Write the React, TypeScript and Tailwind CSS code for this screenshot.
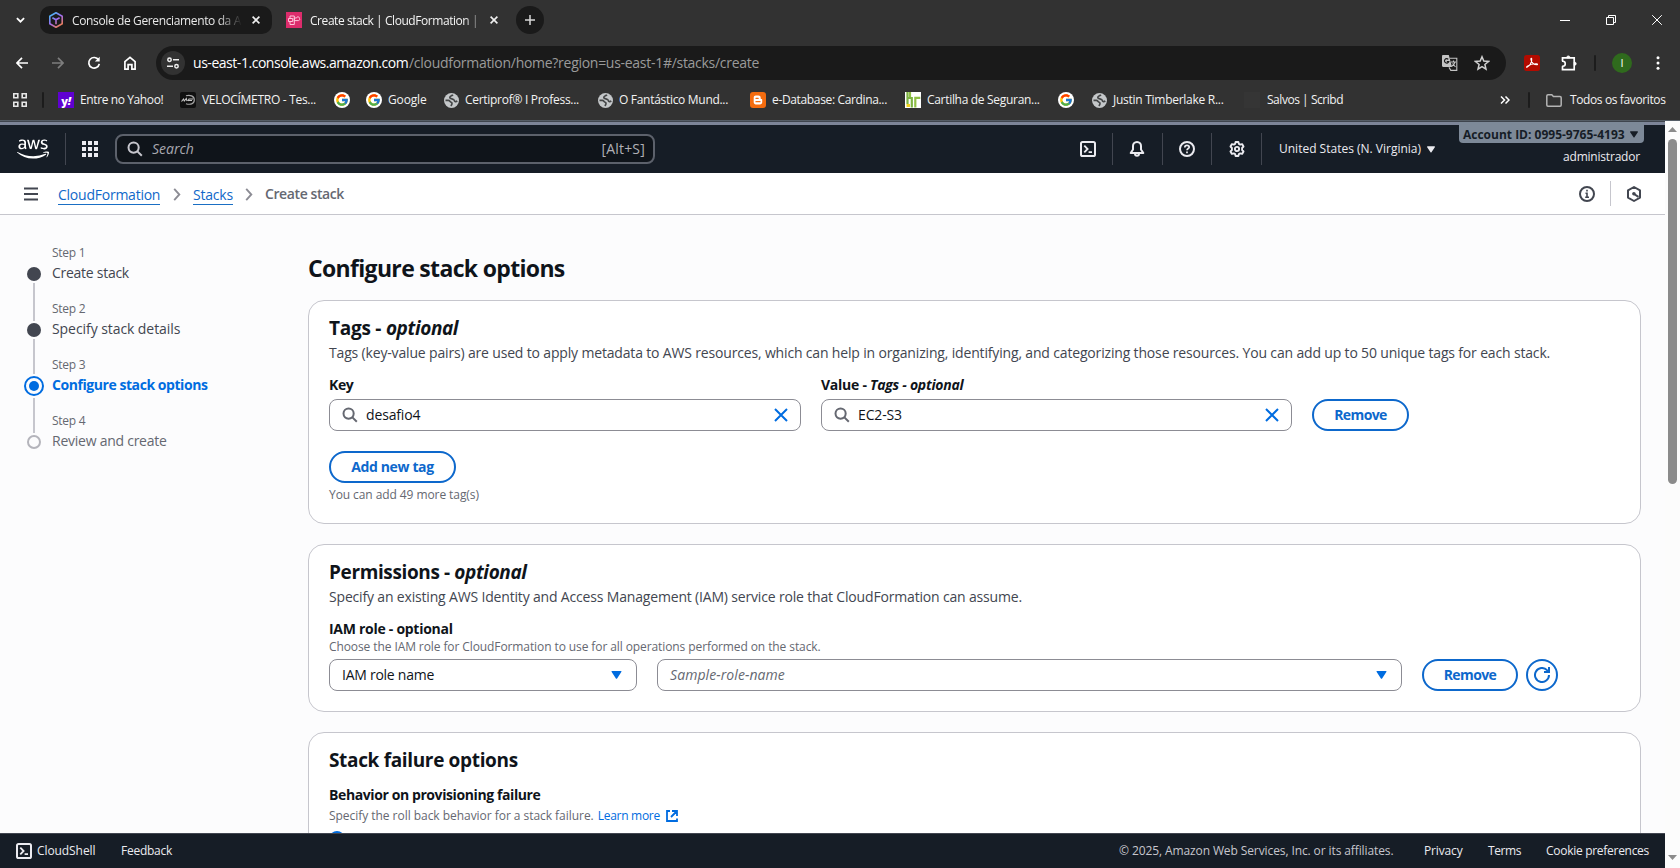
import type { ReactNode } from "react";
import { FaAws } from "react-icons/fa";
import { FcGoogle } from "react-icons/fc";

function Globe() {
  return (
    <svg viewBox="0 0 16 16" className="size-[15px] shrink-0">
      <circle cx="8" cy="8" r="8" fill="#c4c7c9" />
      <path d="M9.5 1.800C8.500 3.200 6 2.800 6.200 5c.200 1.800 4.600.8 4.800 3 .1 1.300 1.800 1.500 3.200.5M1.600 7.800h3.200c1.400 0 1.400 1.600 2.800 2s1.200 2.600-.4 4" fill="none" stroke="#444647" strokeWidth="1.800" />
    </svg>
  );
}

function GoogleBadge() {
  return (
    <span className="flex size-4 shrink-0 items-center justify-center rounded-full bg-white">
      <FcGoogle className="size-[14px]" />
    </span>
  );
}

function CloudShellIcon() {
  return (
    <svg viewBox="0 0 16 16" className="size-4 shrink-0" fill="none" stroke="currentColor" strokeWidth="2">
      <rect x="1" y="1" width="14" height="14" rx="1.6" />
      <path d="M4.300 4.600L7.600 8l-3.300 3.400M8.600 11.200h3.400" strokeWidth="1.800" />
    </svg>
  );
}

function SearchIcon({ className }: { className: string }) {
  return (
    <svg viewBox="0 0 16 16" className={className} fill="none" stroke="currentColor" strokeWidth="2">
      <circle cx="6.600" cy="6.600" r="5.100" />
      <path d="M10.400 10.400l4.400 4.400" />
    </svg>
  );
}

function CloseIcon({ className }: { className: string }) {
  return (
    <svg viewBox="0 0 14 14" className={className} fill="none" stroke="currentColor" strokeWidth="2">
      <path d="M1 1l12 12M13 1L1 13" />
    </svg>
  );
}

function TabClose({ className }: { className: string }) {
  return (
    <svg viewBox="0 0 8 8" className={`size-2 shrink-0 ${className}`} fill="none" stroke="#f0f0f0" strokeWidth="1.600">
      <path d="M.6.6l6.800 6.800M7.400.6L.6 7.400" />
    </svg>
  );
}

function Caret({ className }: { className: string }) {
  return (
    <svg viewBox="0 0 10 8" className={className} fill="currentColor">
      <path d="M.8 0h8.400c.7 0 1 .6.6 1.100L5.600 7.500c-.3.4-.9.4-1.200 0L.2 1.100C-.2.6.1 0 .8 0z" />
    </svg>
  );
}

function TabStrip() {
  return (
    <div className="flex h-10 items-center text-xs text-[#e8e8e8]">
      <svg viewBox="0 0 10 6" className="ml-[15.500px] h-1.5 w-[9px] shrink-0" fill="none" stroke="#fff" strokeWidth="2">
        <path d="M1 .8l4 4 4-4" />
      </svg>
      <div className="ml-[15.500px] flex h-7 w-[232px] items-center rounded-[10px] bg-[#1a1a1a]">
        <svg viewBox="0 0 16 16" className="ml-2 size-4 shrink-0" fill="none" stroke="url(#cube)" strokeWidth="1.600" strokeLinejoin="round">
          <defs>
            <linearGradient id="cube" gradientUnits="userSpaceOnUse" x1="2" y1="1" x2="13" y2="15">
              <stop offset="0" stopColor="#35c5f0" />
              <stop offset=".5" stopColor="#a06bf0" />
              <stop offset="1" stopColor="#f5803c" />
            </linearGradient>
          </defs>
          <path d="M8 .8l6.200 3.500v7.400L8 15.200l-6.200-3.500V4.300z" />
          <path d="M4.400 5.700L8 7.800l3.600-2.100M8 7.800v4.400" />
        </svg>
        <span className="ml-2 w-[172px] pt-px tracking-[-0.370px] whitespace-nowrap [mask-image:linear-gradient(to_right,#000_146px,transparent_170px)]">
          Console de Gerenciamento da A
        </span>
        <TabClose className="ml-2" />
      </div>
      <svg viewBox="0 0 16 16" className="ml-[14px] size-4 shrink-0">
        <rect width="16" height="16" fill="#dd2c6c" />
        <path d="M2.500 6.500h4.200v3H2.500zM4 6.500V4h4.300v8.500H4V9.500M8.300 9.200V6h2.200c.3-1.800 3.300-1.400 3 .5.7 1-.1 2.200-1.200 2.100H8.300" fill="none" stroke="#ffc4da" strokeWidth="1" />
      </svg>
      <span className="ml-2 w-[172px] pt-px tracking-[-0.440px] whitespace-nowrap text-[#f4f4f4] [mask-image:linear-gradient(to_right,#000_154px,transparent_176px)]">
        Create stack | CloudFormation |
      </span>
      <TabClose className="ml-2" />
      <span className="ml-[18px] flex size-7 shrink-0 items-center justify-center rounded-full bg-[#1a1a1a]">
        <svg viewBox="0 0 10 10" className="size-2.5" stroke="#d8d8d8" strokeWidth="1.500">
          <path d="M5 0v10M0 5h10" />
        </svg>
      </span>
      <div className="ml-auto flex items-center gap-9 pr-[18px] text-white">
        <svg viewBox="0 0 10 10" className="size-2.5" stroke="currentColor">
          <path d="M0 5.500h10" />
        </svg>
        <svg viewBox="0 0 10 10" className="size-2.5" fill="none" stroke="currentColor">
          <path d="M.5 2.500h7v7h-7zM2.500 2.500v-2h7v7h-2" />
        </svg>
        <svg viewBox="0 0 10 10" className="size-2.5" fill="none" stroke="currentColor">
          <path d="M.2.200l9.600 9.600M9.800.2L.2 9.800" />
        </svg>
      </div>
    </div>
  );
}

function Toolbar() {
  return (
    <div className="flex h-[46px] items-center">
      <svg viewBox="0 0 12 12" className="ml-4 size-3 shrink-0" fill="none" stroke="#fff" strokeWidth="1.700">
        <path d="M12 6H1.200M6 .8L.9 6 6 11.200" />
      </svg>
      <svg viewBox="0 0 12 12" className="ml-6 size-3 shrink-0" fill="none" stroke="#7e7e7e" strokeWidth="1.700">
        <path d="M0 6h10.800M6 .8L11.100 6 6 11.200" />
      </svg>
      <svg viewBox="0 0 12 12" className="ml-6 size-3 shrink-0 overflow-visible" fill="none" stroke="#fff" strokeWidth="1.700">
        <path d="M10.600 3A5.300 5.300 0 1 0 11.300 6.800" />
        <path d="M11.700-.3v4.800H6.900z" fill="#fff" stroke="none" />
      </svg>
      <svg viewBox="0 0 14 14" className="ml-[23px] size-[14px] shrink-0" fill="none" stroke="#fff" strokeWidth="1.700">
        <path d="M1.900 5.700L7 1.400l5.100 4.300v7.400H8.900V8.700H5.100v4.400H1.900z" />
      </svg>
      <div className="ml-[19px] flex h-[34px] w-[1350px] items-center rounded-full bg-[#1a1a1a] text-sm">
        <span className="ml-[5px] flex size-6 items-center justify-center rounded-full bg-[#323232]">
          <svg viewBox="0 0 12 12" className="size-3" fill="none" stroke="#eee" strokeWidth="1.500">
            <circle cx="2.500" cy="2.700" r="1.700" />
            <path d="M6 2.700h6M0 9.300h6" />
            <circle cx="9.500" cy="9.300" r="1.700" />
          </svg>
        </span>
        <span className="ml-2 w-[216px] tracking-[-0.460px] whitespace-nowrap text-white">us-east-1.console.aws.amazon.com</span>
        <span className="tracking-[-0.284px] whitespace-nowrap text-[#9a9a9a]">/cloudformation/home?region=us-east-1#/stacks/create</span>
        <svg viewBox="0 0 16 16" className="ml-auto size-4 shrink-0">
          <path d="M1.200 0h5.600L10 12H1.200C.5 12 0 11.500 0 10.800V1.200C0 .5.500 0 1.200 0z" fill="#c4c4c4" />
          <path d="M7.600 3.200h7.200v12.200H8.800L7 12.400M9 7h5M11.500 5.500V7M13 7c-.500 2-2 3.500-3.500 4.500M10.500 8.500l3 3.500" fill="none" stroke="#c4c4c4" strokeWidth="1.100" />
          <path d="M6.300 4.300a2.200 2.200 0 1 0 .500 2.200H4.800" fill="none" stroke="#1a1a1a" strokeWidth="1.200" />
        </svg>
        <svg viewBox="0 0 16 16" className="mr-4 ml-4 size-4 shrink-0" fill="none" stroke="#d0d0d0" strokeWidth="1.500">
          <path d="M8 1.800l1.800 4.300 4.700.4-3.600 3 1.100 4.600L8 11.700l-4 2.400 1.100-4.600-3.600-3 4.700-.4z" />
        </svg>
      </div>
      <svg viewBox="0 0 16 16" className="ml-[18px] size-4 shrink-0">
        <rect width="16" height="16" rx="2.500" fill="#b30b00" />
        <path d="M3 12.300c2.300-.9 5.200-5 4.700-8.300-.1-1-.9-.8-.8.100.3 3 2.800 5.700 6 5.700.9 0 .8-.9-.2-1-3.200-.2-6.700.6-9.300 2.500-.9.7-1 1.200-.4 1z" fill="none" stroke="#fff" strokeWidth="1.100" />
      </svg>
      <svg viewBox="0 0 16 16" className="ml-[21px] size-4 shrink-0" fill="none" stroke="#fff" strokeWidth="1.700">
        <path d="M1.500 6.200V2.900h11.700V14.600H1.500v-3.300" />
        <path d="M1 6.300h.8a2.400 2.400 0 0 1 0 4.900H1" strokeWidth="1.600" />
        <path d="M5.600 2.900a1.700 2 0 0 1 3.400 0zM13.200 7a2 1.700 0 0 1 0 3.400z" fill="#fff" strokeWidth=".8" />
      </svg>
      <span className="ml-[17px] h-4 w-0.5 rounded bg-[#1c1c1c]" />
      <span className="ml-4 flex size-5 items-center justify-center rounded-full bg-[#2f6a1d] text-[11px] text-white">I</span>
      <svg viewBox="0 0 4 14" className="ml-6 h-[14px] w-1" fill="#fff">
        <circle cx="2" cy="1.800" r="1.500" />
        <circle cx="2" cy="7" r="1.500" />
        <circle cx="2" cy="12.200" r="1.500" />
      </svg>
    </div>
  );
}

function Bookmark({ icon, label, box }: { icon: ReactNode; label?: string; box: string }) {
  return (
    <span className={`flex shrink-0 items-center whitespace-nowrap ${box}`}>
      {icon}
      {label && <span className="ml-1.5">{label}</span>}
    </span>
  );
}

function Bookmarks() {
  return (
    <div className="flex h-[34px] items-center pb-1.5 text-xs text-[#f2f2f2]">
      <svg viewBox="0 0 14 14" className="ml-[13px] size-[14px] shrink-0" fill="none" stroke="#e6e6e6" strokeWidth="1.600">
        <path d="M.8.800h4v4h-4zM9.200.800h4v4h-4zM.8 9.200h4v4h-4zM9.200 9.200h4v4h-4z" />
      </svg>
      <span className="mr-[14px] ml-[15px] h-4 w-0.5 shrink-0 rounded bg-[#1c1c1c]" />
      <Bookmark
        box="w-[122px] tracking-[-0.390px]"
        label="Entre no Yahoo!"
        icon={<span className="flex size-4 items-center justify-center bg-[#5f01d1] text-[11px] leading-none font-extrabold text-white">y<i>!</i></span>}
      />
      <Bookmark
        box="w-[154px] tracking-[-0.290px]"
        label="VELOCÍMETRO - Tes..."
        icon={
          <svg viewBox="0 0 16 16" className="size-4">
            <rect width="16" height="16" rx="2" fill="#101010" />
            <path d="M6 3.800c4-1.300 8.300.2 8.300 4.200s-4.300 5-8.300 3.700" fill="none" stroke="#a5a5a5" strokeWidth="1.200" />
            <path d="M1.500 9.500l2-2.500.8 2 2-2.500.7 2.500M8 9l1-2h4M8.500 8.500H12" fill="none" stroke="#c5c5c5" strokeWidth="1.100" />
          </svg>
        }
      />
      <Bookmark box="w-8" icon={<GoogleBadge />} />
      <Bookmark box="w-[78px] tracking-[-0.140px]" label="Google" icon={<GoogleBadge />} />
      <Bookmark box="w-[154px] tracking-[-0.290px]" label="Certiprof® I Profess..." icon={<Globe />} />
      <Bookmark box="w-[152px] tracking-[-0.300px]" label="O Fantástico Mund..." icon={<Globe />} />
      <Bookmark
        box="w-[155px] tracking-[-0.350px]"
        label="e-Database: Cardina..."
        icon={
          <svg viewBox="0 0 16 16" className="size-4">
            <rect width="16" height="16" rx="3" fill="#f46c0f" />
            <path d="M5.800 3.600h2.700c1.200 0 2.200.9 2.200 2.100v.8c0 .5.500.5 1 .6.400.1.500.4.500.8v2.300c0 1.300-1 2.200-2.200 2.200H5.800c-1.200 0-2.100-.9-2.100-2.100V5.700c0-1.200.9-2.100 2.100-2.100z" fill="#fff" />
            <path d="M6 6.300h2.200M6 9.700h4" stroke="#f46c0f" strokeWidth="1.300" strokeLinecap="round" />
          </svg>
        }
      />
      <Bookmark
        box="w-[153px] tracking-[-0.310px]"
        label="Cartilha de Seguran..."
        icon={
          <svg viewBox="0 0 16 16" className="size-4">
            <rect width="16" height="16" fill="#fff" />
            <path d="M2.500 0v12M2.500 6h4.300v9.500" fill="none" stroke="#7cb342" strokeWidth="2.200" />
            <path d="M5 0v5M10.300 15.500V5.800h5" fill="none" stroke="#8fbf45" strokeWidth="2.200" />
            <path d="M1.500 12h3.500v3H1.500z" fill="#f2d21f" />
          </svg>
        }
      />
      <Bookmark box="w-[34px]" icon={<GoogleBadge />} />
      <Bookmark box="w-[152px] tracking-[-0.270px]" label="Justin Timberlake R..." icon={<Globe />} />
      <Bookmark box="w-[120px] tracking-[-0.460px]" label="Salvos | Scribd" icon={<span className="mr-px size-4 bg-[#353535]" />} />
      <svg viewBox="0 0 10 8" className="ml-auto h-2 w-2.5 shrink-0" fill="none" stroke="#fff" strokeWidth="1.500">
        <path d="M1 .5L4.500 4 1 7.500M5.500.5L9 4 5.500 7.500" />
      </svg>
      <span className="mr-4 ml-[18px] h-4 w-0.5 shrink-0 rounded bg-[#1c1c1c]" />
      <svg viewBox="0 0 16 13" className="h-[13px] w-4 shrink-0" fill="none" stroke="#b4b4b4" strokeWidth="1.500">
        <path d="M.8 2c0-.7.500-1.200 1.200-1.200h3.800l1.600 1.700H14c.7 0 1.200.5 1.200 1.200V11c0 .7-.500 1.200-1.200 1.200H2c-.7 0-1.200-.5-1.200-1.200z" />
      </svg>
      <span className="mr-[14px] ml-2 w-[96px] shrink-0 tracking-[-0.380px] whitespace-nowrap">Todos os favoritos</span>
    </div>
  );
}

function Rule() {
  return <span className="h-8 w-px shrink-0 bg-[#424650]" />;
}

function ServiceNav() {
  return (
    <div className="flex h-12 bg-[#161d26] text-[#ebebf0]">
      <div className="flex h-12 items-center">
        <FaAws className="mr-[16px] ml-[17px] h-[26px] w-8 shrink-0 text-white" />
        <Rule />
        <svg viewBox="0 0 16 16" className="ml-4 size-4 shrink-0" fill="currentColor">
          <path d="M0 0h4v4H0zM6 0h4v4H6zM12 0h4v4h-4zM0 6h4v4H0zM6 6h4v4H6zM12 6h4v4h-4zM0 12h4v4H0zM6 12h4v4H6zM12 12h4v4h-4z" />
        </svg>
        <div className="ml-[17px] flex h-[30px] w-[540px] items-center rounded-lg border-2 border-[#5c616b] bg-[#0f141a] text-sm">
          <SearchIcon className="ml-[10px] size-4 text-[#c6c6cd]" />
          <span className="ml-[9px] text-[#a8a8b0] italic">Search</span>
          <span className="mr-2 ml-auto tracking-[0.200px] text-[#b0b0b6]">[Alt+S]</span>
        </div>
      </div>
      <div className="ml-auto flex h-12 items-center">
        <CloudShellIcon />
        <span className="w-4" />
        <Rule />
        <svg viewBox="0 0 16 16" className="mr-[17px] ml-4 size-4 shrink-0" fill="none" stroke="currentColor" strokeWidth="2" strokeLinejoin="round">
          <path d="M8 1C5.500 1 4 2.900 4 5v3.500L1.700 12h12.600L12 8.500V5c0-2.100-1.500-4-4-4z" />
          <path d="M6 12.500c0 3 4 3 4 0" />
        </svg>
        <Rule />
        <svg viewBox="0 0 16 16" className="mx-4 size-4 shrink-0" fill="none" stroke="currentColor" strokeWidth="2">
          <circle cx="8" cy="8" r="7" />
          <path d="M5.800 6.500c0-1.300.9-2.200 2.200-2.200s2.200.8 2.200 2S8 7.700 8 9.300M8 10.600v1.700" strokeWidth="1.700" />
        </svg>
        <Rule />
        <svg viewBox="0 0 16 16" className="mr-4 ml-[17px] size-4 shrink-0" fill="none" stroke="currentColor" strokeWidth="1.900" strokeLinejoin="round">
          <path d="M6.600 1h2.800l.5 1.900 1.300.7 1.900-.5 1.400 2.400L13.100 7v2l1.400 1.500-1.400 2.400-1.900-.5-1.300.7-.5 1.900H6.600l-.5-1.900-1.300-.7-1.900.5-1.400-2.400L2.900 9V7L1.500 5.500l1.400-2.400 1.900.5 1.300-.7z" />
          <circle cx="8" cy="8" r="2.100" />
        </svg>
        <Rule />
        <span className="ml-[17px] w-[148px] text-xs font-medium whitespace-nowrap">United States (N. Virginia)</span>
        <Caret className="h-[7px] w-2" />
      </div>
      <div className="ml-6 flex h-12 w-[206px] flex-col">
        <div className="-mt-[3px] flex h-[21px] w-[185px] items-center rounded-b bg-[#7d8998] pt-1 pl-1 text-xs font-bold text-[#161d26]">
          <span className="w-[167px] whitespace-nowrap">Account ID: 0995-9765-4193</span>
          <Caret className="h-[7px] w-2" />
        </div>
        <div className="mt-[6px] w-[181px] text-right text-xs leading-4 font-medium tracking-[-0.200px]">administrador</div>
      </div>
    </div>
  );
}

function BreadcrumbChevron({ className }: { className: string }) {
  return (
    <svg viewBox="0 0 8 14" className={`h-[13px] w-2 shrink-0 ${className}`} fill="none" stroke="#8c8c94" strokeWidth="2">
      <path d="M1 1l5.500 6L1 13" />
    </svg>
  );
}

function BreadcrumbBar() {
  return (
    <div className="flex h-[42px] items-center border-b border-[#c6c6cd] bg-white text-sm">
      <svg viewBox="0 0 14 14" className="ml-6 size-[14px] shrink-0" stroke="#424650" strokeWidth="2">
        <path d="M0 1.500h14M0 7h14M0 12.500h14" />
      </svg>
      <div className="flex items-center pt-0.5">
        <a className="ml-5 w-[102px] border-b border-[#1a6fc4] leading-[19px] tracking-[-0.240px] text-[#0f68c9]">CloudFormation</a>
        <BreadcrumbChevron className="mr-3 ml-[13px]" />
        <a className="w-10 border-b border-[#1a6fc4] leading-[19px] tracking-[-0.200px] text-[#0f68c9]">Stacks</a>
        <BreadcrumbChevron className="mr-3 ml-3" />
        <span className="pb-px font-semibold tracking-[-0.400px] text-[#656871]">Create stack</span>
      </div>
      <svg viewBox="0 0 16 16" className="ml-auto size-4 shrink-0" fill="none" stroke="#424650" strokeWidth="2">
        <circle cx="8" cy="8" r="7" />
        <path d="M8 3.800v1.800M6.500 7.300H8v3.600M6.200 11.300h3.800" strokeWidth="1.600" />
      </svg>
      <span className="ml-[15px] h-[25px] w-px bg-[#c6c6cd]" />
      <svg viewBox="0 0 16 16" className="mr-[23px] ml-[15px] size-4 shrink-0" fill="none" stroke="#424650" strokeWidth="2" strokeLinejoin="round">
        <path d="M8 1l6 3.400v7.200L8 15l-6-3.400V4.400z" />
        <circle cx="7.900" cy="7.800" r="1.800" fill="#424650" stroke="none" />
        <path d="M8 8l4.500 2.800" />
      </svg>
    </div>
  );
}

function Step({ n, name, tone }: { n: number; name: string; tone: string }) {
  return (
    <li>
      <div className="h-[18px] text-xs leading-[18px] tracking-[-0.250px] text-[#656871]">Step {n}</div>
      <div className={`h-[21px] leading-[21px] whitespace-nowrap ${tone}`}>{name}</div>
    </li>
  );
}

function Steps() {
  return (
    <div className="flex w-[308px] shrink-0 pt-7 pl-6">
      <div className="flex w-5 flex-col items-center pt-[24px]">
        <span className="size-[14px] rounded-full bg-[#424650]" />
        <span className="mt-[2px] h-[38px] w-0.5 bg-[#c6c6cd]" />
        <span className="mt-[2px] size-[14px] rounded-full bg-[#424650]" />
        <span className="mt-[2px] h-[35px] w-0.5 bg-[#c6c6cd]" />
        <span className="mt-[2px] flex size-5 items-center justify-center rounded-full border-2 border-[#006ce0]">
          <span className="size-2.5 rounded-full bg-[#006ce0]" />
        </span>
        <span className="mt-[2px] h-[35px] w-0.5 bg-[#c6c6cd]" />
        <span className="mt-[2px] size-[14px] rounded-full border-2 border-[#b4b4bb]" />
      </div>
      <ol className="ml-2 flex flex-col gap-[17px] pt-px text-sm">
        <Step n={1} name="Create stack" tone="text-[#424650] tracking-[-0.270px]" />
        <Step n={2} name="Specify stack details" tone="text-[#424650] tracking-[-0.070px]" />
        <Step n={3} name="Configure stack options" tone="font-bold text-[#006ce0] tracking-[-0.440px]" />
        <Step n={4} name="Review and create" tone="text-[#656871] tracking-[-0.250px]" />
      </ol>
    </div>
  );
}

function PillButton({ children, box }: { children: ReactNode; box: string }) {
  return (
    <button className={`flex h-8 items-center justify-center rounded-full border-2 border-[#0d68cc] text-sm font-bold whitespace-nowrap text-[#0d68cc] ${box}`}>
      {children}
    </button>
  );
}

function TokenInput({ value, box }: { value: string; box: string }) {
  return (
    <div className={`flex h-8 items-center rounded-lg border border-[#8c8c94] bg-white text-sm text-[#0f141a] ${box}`}>
      <SearchIcon className="ml-[11.500px] size-4 text-[#656871]" />
      <span className="ml-[8.500px] tracking-[-0.150px]">{value}</span>
      <CloseIcon className="mr-3 ml-auto size-[14px] text-[#006ce0]" />
    </div>
  );
}

const card = "border border-[#c6c6cd] bg-white pl-5";
const heading = "text-[19px] leading-6 font-bold text-[#0f141a]";
const label = "text-sm leading-5 font-bold text-[#0f141a]";

function TagsCard() {
  return (
    <section className={`${card} h-[224px] rounded-2xl pt-[15px]`}>
      <h2 className={`${heading} tracking-[-0.250px]`}>Tags - <i className="tracking-[-0.400px]">optional</i></h2>
      <p className="mt-[3px] text-sm leading-5 tracking-[-0.165px] whitespace-nowrap text-[#424650]">
        Tags (key-value pairs) are used to apply metadata to AWS resources, which can help in organizing, identifying, and categorizing those resources. You can add up to 50 unique tags for each stack.
      </p>
      <div className="mt-3 flex items-end">
        <div>
          <div className={`mb-1 tracking-[-0.350px] ${label}`}>Key</div>
          <TokenInput value="desafio4" box="w-[472px]" />
        </div>
        <div className="ml-5">
          <div className={`mb-1 tracking-[-0.260px] ${label}`}>Value - <i>Tags - optional</i></div>
          <TokenInput value="EC2-S3" box="w-[471px]" />
        </div>
        <PillButton box="ml-5 w-[97px] tracking-[-0.600px]">Remove</PillButton>
      </div>
      <PillButton box="mt-5 w-[127px] tracking-[-0.370px]">Add new tag</PillButton>
      <p className="mt-1 text-xs leading-4 tracking-[-0.080px] text-[#656871]">You can add 49 more tag(s)</p>
    </section>
  );
}

function PermissionsCard() {
  return (
    <section className={`${card} mt-5 h-[168px] rounded-2xl pt-[15px]`}>
      <h2 className={`${heading} tracking-[-0.380px]`}>Permissions - <i>optional</i></h2>
      <p className="mt-[3px] text-sm leading-5 tracking-[-0.172px] text-[#424650]">
        Specify an existing AWS Identity and Access Management (IAM) service role that CloudFormation can assume.
      </p>
      <div className={`mt-3 tracking-[-0.280px] ${label}`}>IAM role - optional</div>
      <p className="text-xs leading-4 tracking-[-0.095px] text-[#656871]">Choose the IAM role for CloudFormation to use for all operations performed on the stack.</p>
      <div className="mt-1 flex items-center text-sm">
        <div className="flex h-8 w-[308px] items-center justify-between rounded-lg border border-[#8c8c94] pr-[14px] pl-3 text-[#0f141a]">
          <span className="tracking-[-0.258px]">IAM role name</span>
          <Caret className="h-2 w-[11px] text-[#006ce0]" />
        </div>
        <div className="ml-5 flex h-8 w-[745px] items-center justify-between rounded-lg border border-[#8c8c94] pr-[14px] pl-3 text-[#656871] italic">
          <span className="tracking-[0.080px]">Sample-role-name</span>
          <Caret className="h-2 w-[11px] text-[#006ce0]" />
        </div>
        <PillButton box="ml-5 w-[96px] tracking-[-0.600px]">Remove</PillButton>
        <button className="ml-2 flex size-8 items-center justify-center rounded-full border-2 border-[#0d68cc] text-[#0d68cc]">
          <svg viewBox="0 0 16 16" className="size-4" fill="none" stroke="currentColor" strokeWidth="2">
            <path d="M15 8a7 7 0 1 1-2-4.900L15 5" />
            <path d="M10 5h5V0" />
          </svg>
        </button>
      </div>
    </section>
  );
}

function FailureCard() {
  return (
    <section className={`${card} mt-5 h-[140px] rounded-t-2xl pt-[15px]`}>
      <h2 className={`${heading} tracking-[-0.340px]`}>Stack failure options</h2>
      <div className={`mt-[13px] tracking-[-0.400px] ${label}`}>Behavior on provisioning failure</div>
      <p className="mt-[3px] flex items-center text-xs leading-4 tracking-[-0.040px] text-[#656871]">
        Specify the roll back behavior for a stack failure.
        <a className="ml-1 flex items-center text-[#006ce0]">
          <span className="w-[68px] tracking-[-0.280px]">Learn more</span>
          <svg viewBox="0 0 12 12" className="size-3" fill="none" stroke="currentColor" strokeWidth="1.800">
            <path d="M4 1H1v10h10V8.500M6 1h5v5M11 1L5 7" />
          </svg>
        </a>
      </p>
      <div className="mt-[7px] size-4 rounded-full border-[5px] border-[#006ce0] bg-white" />
    </section>
  );
}

function FooterBar() {
  return (
    <footer className="flex h-[35px] shrink-0 items-center border-t border-[#424650] bg-[#161d26] text-xs font-medium whitespace-nowrap text-[#ebebf0]">
      <span className="ml-4"><CloudShellIcon /></span>
      <span className="ml-[5px] w-[84px] tracking-[-0.080px]">CloudShell</span>
      <span className="tracking-[-0.260px]">Feedback</span>
      <span className="ml-auto w-[305px] font-normal tracking-[-0.104px] text-[#c6c6cd]">© 2025, Amazon Web Services, Inc. or its affiliates.</span>
      <span className="w-16 tracking-[-0.140px]">Privacy</span>
      <span className="w-[58px] tracking-[-0.400px]">Terms</span>
      <span className="w-[119px] tracking-[-0.286px]">Cookie preferences</span>
    </footer>
  );
}

export default function App() {
  return (
    <div className="flex h-[868px] w-[1680px] flex-col overflow-hidden bg-[#323232] [font-family:'Open_Sans',sans-serif]">
      <TabStrip />
      <Toolbar />
      <Bookmarks />
      <div className="h-px shrink-0 bg-[#555d66]" />
      <div className="flex min-h-0 flex-1">
        <div className="flex w-[1665px] flex-col">
          <div className="h-1 shrink-0 border-t border-[#3f454e] bg-[#7d8598]" />
          <ServiceNav />
          <BreadcrumbBar />
          <div className="flex min-h-0 flex-1 overflow-hidden bg-[#fcfcfd]">
            <Steps />
            <main className="w-[1333px] shrink-0 pt-[38px]">
              <h1 className="mb-[17px] h-[30px] text-[23px] leading-[30px] font-bold tracking-[-0.670px] text-[#0f141a]">Configure stack options</h1>
              <TagsCard />
              <PermissionsCard />
              <FailureCard />
            </main>
          </div>
          <FooterBar />
        </div>
        <div className="flex w-[15px] flex-col items-center bg-[#fcfcfc] pt-[6px]">
          <svg viewBox="0 0 9 5" className="h-[5px] w-[9px]" fill="#8b8b8b"><path d="M0 5h9L4.500 0z" /></svg>
          <span className="mt-[7px] h-[345px] w-[9px] rounded-full bg-[#8b8b8b]" />
          <svg viewBox="0 0 9 5" className="mt-auto mb-2 h-[5px] w-[9px]" fill="#8b8b8b"><path d="M0 0h9L4.500 5z" /></svg>
        </div>
      </div>
    </div>
  );
}
